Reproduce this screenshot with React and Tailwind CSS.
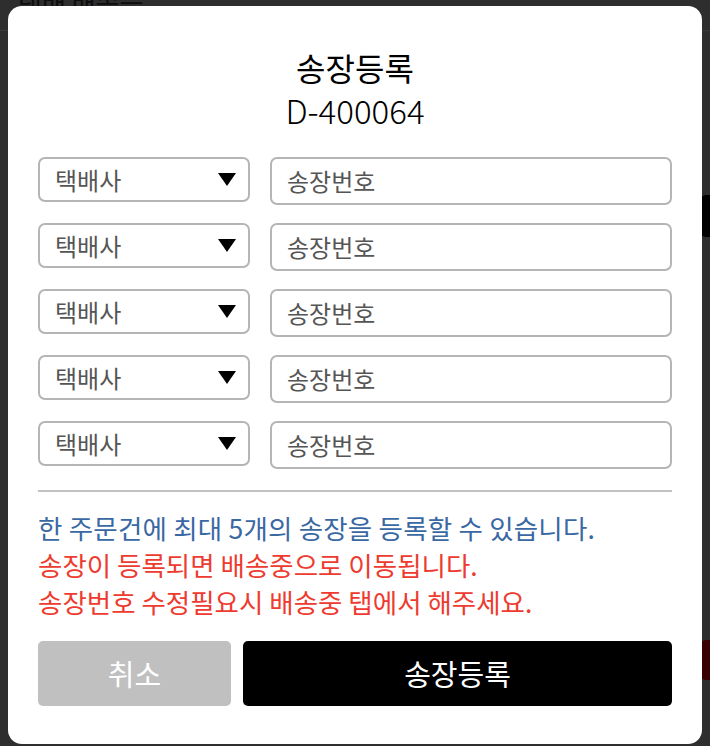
import React from "react";

const font = { fontFamily: '"Noto Sans CJK KR", "Noto Sans", sans-serif' };

function Row() {
  return (
    <div className="flex items-start gap-[20px]">
      <div className="w-[212px] h-[45px] border-2 border-[#b5b5b5] rounded-[7px] flex items-center justify-between pl-[15px] pr-[12px]">
        <span className="text-[24px] text-[#555555] leading-none">택배사</span>
        <svg width="18" height="14" viewBox="0 0 18 14">
          <polygon points="0,0 18,0 9,13" fill="#000" />
        </svg>
      </div>
      <div className="flex-1 h-[48px] border-2 border-[#b5b5b5] rounded-[7px] flex items-center pl-[15px]">
        <span className="text-[24px] text-[#555555] leading-none">송장번호</span>
      </div>
    </div>
  );
}

export default function App() {
  return (
    <div style={font} className="relative w-[710px] h-[746px] bg-[#2e2e2e] overflow-hidden">
      <div className="absolute left-[18px] top-[-18px] text-[26px] text-[#0d0d0d]">택배 배송등</div>
      <div className="absolute left-[700px] top-[195px] w-[20px] h-[42px] bg-black rounded-[6px]"></div>
      <div className="absolute left-[700px] top-[640px] w-[20px] h-[40px] bg-[#3a0000] rounded-[6px]"></div>
      <div className="absolute left-0 top-[30px] w-[710px] h-px bg-[#3a3a3a]"></div>

      <div className="relative ml-[8px] mt-[6px] w-[694px] h-[738px] bg-white rounded-[14px] px-[30px] flex flex-col">
        <div className="pt-[41px] flex flex-col items-center">
          <div className="text-[32px] leading-[40px] text-black">송장등록</div>
          <div className="text-[33px] leading-[46px] text-black font-light">D-400064</div>
        </div>
        <div className="mt-[24px] flex flex-col gap-[18px]">
          <Row />
          <Row />
          <Row />
          <Row />
          <Row />
        </div>
        <div className="mt-[21px] h-[2px] bg-[#c2c2c2]"></div>
        <div className="mt-[17px] text-[26.5px] leading-[37px]">
          <div className="text-[#3a68a3] tracking-[0.2px]">한 주문건에 최대 5개의 송장을 등록할 수 있습니다.</div>
          <div className="text-[#ee3b2f]">송장이 등록되면 배송중으로 이동됩니다.</div>
          <div className="text-[#ee3b2f]">송장번호 수정필요시 배송중 탭에서 해주세요.</div>
        </div>
        <div className="mt-[21px] flex gap-[12px]">
          <button className="w-[193px] h-[65px] bg-[#c0c0c0] rounded-[5px] text-white text-[29px]">취소</button>
          <button className="flex-1 h-[65px] bg-black rounded-[5px] text-white text-[29px]">송장등록</button>
        </div>
      </div>
    </div>
  );
}
